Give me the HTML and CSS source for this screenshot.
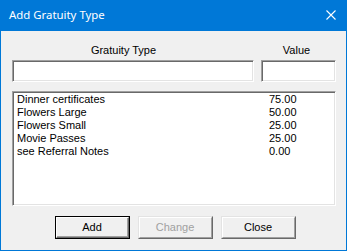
FILE: index.html
```html
<!DOCTYPE html>
<html>
<head>
<meta charset="utf-8">
<link rel="stylesheet" href="styles.css">
</head>
<body>
<div class="window">
  <div class="titlebar">
    <span class="title">Add Gratuity Type</span>
    <svg class="close-x" width="10" height="10" viewBox="0 0 10 10"><path d="M0.5 0.5 L9.5 9.5 M9.5 0.5 L0.5 9.5" stroke="#fff" stroke-width="1.1" fill="none"/></svg>
  </div>
  <div class="client">
    <div class="fields">
      <div class="label label-type">Gratuity Type</div>
      <div class="label label-value">Value</div>
      <div class="edit"></div>
      <div class="edit"></div>
    </div>
    <div class="listbox">
      <div class="row"><span>Dinner certificates</span><span class="val">75.00</span></div>
      <div class="row"><span>Flowers Large</span><span class="val">50.00</span></div>
      <div class="row"><span>Flowers Small</span><span class="val">25.00</span></div>
      <div class="row"><span>Movie Passes</span><span class="val">25.00</span></div>
      <div class="row"><span>see Referral Notes</span><span class="val">0.00</span></div>
    </div>
    <div class="buttons">
      <div class="btn default"><div class="face">Add</div></div>
      <div class="btn disabled"><div class="face">Change</div></div>
      <div class="btn"><div class="face">Close</div></div>
    </div>
  </div>
</div>
</body>
</html>
```

FILE: styles.css
```css
html, body {
  margin: 0;
  padding: 0;
  background: #f0f0f0;
}
.window {
  width: 347px;
  height: 251px;
  box-sizing: border-box;
  background: #0078d7;
  padding: 0 1px 1px 1px;
  display: flex;
  flex-direction: column;
  font-family: "Liberation Sans", Arial, sans-serif;
  font-size: 11px;
  color: #000;
}
.titlebar {
  height: 31px;
  flex: none;
  display: flex;
  align-items: center;
  justify-content: space-between;
  padding: 0 10px 0 8px;
}
.title {
  color: #fff;
  font-family: "Noto Sans", "Open Sans", sans-serif;
  font-size: 11.4px;
  line-height: 16px;
  margin-top: -1px;
}
.close-x {
  display: block;
  margin-top: -1px;
}
.client {
  flex: 1;
  background: #f0f0f0;
  padding: 13px 10px 11px 11px;
  display: flex;
  flex-direction: column;
}
.fields {
  display: grid;
  grid-template-columns: 242px 75px;
  column-gap: 7px;
  row-gap: 3px;
}
.label {
  line-height: 13px;
  height: 13px;
  text-align: center;
}
.label-type { padding-right: 19px; }
.label-value { padding-right: 4px; }
.edit {
  height: 22px;
  box-sizing: border-box;
  background: #fff;
  border: 1px solid;
  border-color: #a0a0a0 #fff #fff #a0a0a0;
  box-shadow: inset 1px 1px #696969, inset -1px -1px #e3e3e3;
}
.listbox {
  margin-top: 9px;
  height: 115px;
  box-sizing: border-box;
  background: #fff;
  border: 1px solid;
  border-color: #a0a0a0 #fff #fff #a0a0a0;
  box-shadow: inset 1px 1px #696969, inset -1px -1px #e3e3e3;
  padding: 1px 2px 0 4px;
}
.row {
  display: flex;
  line-height: 13px;
  height: 13px;
  white-space: nowrap;
}
.row span:first-child {
  width: 252px;
}
.buttons {
  margin-top: 10px;
  display: flex;
  justify-content: center;
  gap: 8px;
  padding-left: 2px;
}
.btn {
  width: 75px;
  height: 23px;
  box-sizing: border-box;
  border: 1px solid;
  border-color: #e3e3e3 #696969 #696969 #e3e3e3;
  background: #f0f0f0;
}
.btn .face {
  height: 100%;
  box-sizing: border-box;
  border: 1px solid;
  border-color: #fff #a0a0a0 #a0a0a0 #fff;
  display: flex;
  align-items: center;
  justify-content: center;
  line-height: 13px;
}
.btn.default {
  border: 1px solid #000;
}
.btn.default .face {
  border-color: #fff #696969 #696969 #fff;
  box-shadow: inset -1px -1px #a0a0a0;
}
.btn.disabled .face {
  color: #a0a0a0;
}
```
